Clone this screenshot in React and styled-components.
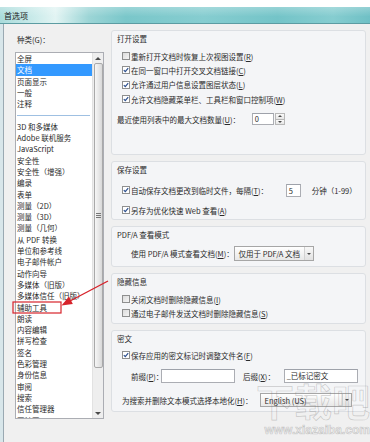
import React from "react";
import styled, { createGlobalStyle } from "styled-components";

const GlobalStyle = createGlobalStyle`
  html, body {
    margin: 0;
    padding: 0;
    background: #fff;
  }
  body {
    font-family: "Noto Sans CJK SC", "Noto Sans", sans-serif;
    font-size: 7.5px;
    color: #2a2a2a;
  }
  * {
    box-sizing: border-box;
  }
`;

const categories = [
  "全屏",
  "文档",
  "页面显示",
  "一般",
  "注释",
  null,
  "3D 和多媒体",
  "Adobe 联机服务",
  "JavaScript",
  "安全性",
  "安全性（增强）",
  "编录",
  "表单",
  "测量（2D）",
  "测量（3D）",
  "测量（几何）",
  "从 PDF 转换",
  "单位和参考线",
  "电子邮件帐户",
  "动作向导",
  "多媒体（旧版）",
  "多媒体信任（旧版）",
  "辅助工具",
  "朗读",
  "内容编辑",
  "拼写检查",
  "签名",
  "色彩管理",
  "身份信息",
  "审阅",
  "搜索",
  "信任管理器",
  "因特网",
];

const Key = ({ k }) => (
  <>
    (<u>{k}</u>)
  </>
);

const Check = ({ on }) => (
  <CheckBox $on={on}>
    {on && (
      <svg width="6" height="6" viewBox="0 0 6 6">
        <path d="M0.8 3.1 L2.3 4.7 L5.2 1.1" fill="none" stroke="#2b4f8f" strokeWidth="1.2" />
      </svg>
    )}
  </CheckBox>
);

const App = () => {
  return (
    <>
      <GlobalStyle />
      <Page>
        <TitleBar>首选项</TitleBar>
        <Frame>
          <Body>
            <Sidebar>
              <SideLabel>种类(G)：</SideLabel>
              <ListBox>
                <Items>
                  {categories.map((c, i) =>
                    c === null ? (
                      <Separator key={i} />
                    ) : (
                      <Item key={i} $selected={c === "文档"}>
                        {c}
                      </Item>
                    )
                  )}
                </Items>
                <ScrollBar>
                  <ScrollBtn>
                    <Tri $up />
                  </ScrollBtn>
                  <Thumb>
                    <Grip />
                  </Thumb>
                  <Track />
                  <ScrollBtn>
                    <Tri />
                  </ScrollBtn>
                </ScrollBar>
              </ListBox>
            </Sidebar>

            <Content>
              <Group $h={125}>
                <GroupTitle>打开设置</GroupTitle>
                <Row $mt={2} $indent={5}>
                  <Check />
                  <span>重新打开文档时恢复上次视图设置<Key k="R" /></span>
                </Row>
                <Row $indent={5}>
                  <Check on />
                  <span>在同一窗口中打开交叉文档链接<Key k="C" /></span>
                </Row>
                <Row $indent={5}>
                  <Check on />
                  <span>允许通过用户信息设置图层状态<Key k="L" /></span>
                </Row>
                <Row $indent={5}>
                  <Check on />
                  <span>允许文档隐藏菜单栏、工具栏和窗口控制项<Key k="W" /></span>
                </Row>
                <Row $mt={7} $h={12}>
                  <FieldLabel $w={134.7}>最近使用列表中的最大文档数量<Key k="U" />：</FieldLabel>
                  <Input $w={22} $h={12}>0</Input>
                  <Spin>
                    <SpinBtn>
                      <Tri $up $small />
                    </SpinBtn>
                    <SpinBtn>
                      <Tri $small />
                    </SpinBtn>
                  </Spin>
                </Row>
              </Group>

              <Group $h={59}>
                <GroupTitle>保存设置</GroupTitle>
                <Row $mt={5} $h={14} $indent={5}>
                  <Check on />
                  <FieldLabel $w={154.7}>自动保存文档更改到临时文件，每隔<Key k="T" />：</FieldLabel>
                  <Input $w={15} $h={13}>5</Input>
                  <Unit>分钟（1-99）</Unit>
                </Row>
                <Row $mt={6} $h={14} $indent={5}>
                  <Check on />
                  <span>另存为优化快速 Web 查看<Key k="A" /></span>
                </Row>
              </Group>

              <Group $h={41}>
                <GroupTitle>PDF/A 查看模式</GroupTitle>
                <Row $mt={3} $h={15} $indent={14}>
                  <FieldLabel $w={103}>使用 PDF/A 模式查看文档<Key k="M" />：</FieldLabel>
                  <Select $w={80} $h={15}>
                    <span>仅用于 PDF/A 文档</span>
                    <DropBtn>
                      <Tri $small />
                    </DropBtn>
                  </Select>
                </Row>
              </Group>

              <Group $h={51}>
                <GroupTitle>隐藏信息</GroupTitle>
                <Row $mt={2} $indent={5}>
                  <Check />
                  <span>关闭文档时删除隐藏信息<Key k="I" /></span>
                </Row>
                <Row $indent={5}>
                  <Check />
                  <span>通过电子邮件发送文档时删除隐藏信息<Key k="S" /></span>
                </Row>
              </Group>

              <Group $h={82}>
                <GroupTitle>密文</GroupTitle>
                <Row $mt={1} $indent={5}>
                  <Check on />
                  <span>保存应用的密文标记时调整文件名<Key k="F" /></span>
                </Row>
                <Row $mt={7} $h={14} $indent={14}>
                  <FieldLabel $w={29.7}>前缀<Key k="P" />：</FieldLabel>
                  <Input $w={74} $h={14} />
                  <FieldLabel $w={40.7} $ml={8.3}>后缀<Key k="X" />：</FieldLabel>
                  <Input $w={74} $h={14}>_已标记密文</Input>
                </Row>
                <Row $mt={10} $h={14} $indent={5}>
                  <FieldLabel $w={138}>为搜索并删除文本模式选择本地化<Key k="H" />：</FieldLabel>
                  <Select $w={92} $h={14}>
                    <span>English (US)</span>
                    <DropBtn>
                      <Tri $small />
                    </DropBtn>
                  </Select>
                </Row>
              </Group>
            </Content>
          </Body>
        </Frame>

        <Annotation width="370" height="442" viewBox="0 0 370 442">
          <rect x="13" y="302" width="48" height="11" fill="none" stroke="#d7232b" strokeWidth="1.2" />
          <line x1="108" y1="281" x2="70" y2="301" stroke="#d7232b" strokeWidth="1.4" />
          <polygon points="61.5,305.5 69,296.6 72.8,304" fill="#d7232b" />
        </Annotation>

        <Watermark>
          <Big>下载吧</Big>
          <Url>www.xiazaiba.com</Url>
        </Watermark>
      </Page>
    </>
  );
};

const Page = styled.div`
  position: relative;
  width: 370px;
  height: 442px;
  overflow: hidden;
  padding-top: 7px;
  background: #fff;
  display: flex;
  flex-direction: column;
`;

const TitleBar = styled.div`
  height: 17px;
  flex-shrink: 0;
  display: flex;
  align-items: center;
  padding-left: 4px;
  font-size: 8px;
  color: #1a1a1a;
  border-bottom: 1px solid #5c9ca2;
  background:
    linear-gradient(180deg, rgba(255, 255, 255, 0.25) 0%, rgba(255, 255, 255, 0) 60%),
    linear-gradient(
      90deg,
      #a9dbdb 0%,
      #cdeceb 10%,
      #e2f4f3 15%,
      #9cd5d6 24%,
      #7ac7ca 34%,
      #86cdd0 55%,
      #74c4c8 75%,
      #86cdd0 90%,
      #6fc0c5 100%
    );
`;

const Frame = styled.div`
  flex: 1;
  display: flex;
  padding-left: 3px;
  background: #d8e6ea;
`;

const Body = styled.div`
  flex: 1;
  display: flex;
  padding: 6px 0 0 11px;
  border-left: 1px solid #9aa9b2;
  background: #f0f0f0;
`;

const Sidebar = styled.div`
  width: 89px;
  flex-shrink: 0;
  padding-top: 4px;
  display: flex;
  flex-direction: column;
`;

const SideLabel = styled.div`
  height: 11px;
  line-height: 11px;
  padding-left: 2px;
  margin-bottom: 7px;
`;

const ListBox = styled.div`
  height: 367px;
  display: flex;
  border: 1px solid #abadb3;
  background: #fff;
`;

const Items = styled.div`
  width: 76px;
  overflow: hidden;
`;

const Item = styled.div`
  height: 11.3px;
  line-height: 11.3px;
  padding-left: 1px;
  white-space: nowrap;
  color: ${(p) => (p.$selected ? "#fff" : "#2a2a2a")};
  background: ${(p) => (p.$selected ? "#3399ff" : "transparent")};
`;

const Separator = styled.div`
  height: 11.3px;
  display: flex;
  align-items: center;
  padding: 0 2px 0 1px;

  &::after {
    content: "";
    flex: 1;
    height: 1px;
    background: #9fc0e2;
  }
`;

const ScrollBar = styled.div`
  width: 11px;
  display: flex;
  flex-direction: column;
  background: #eeeeee;
  border-left: 1px solid #e2e2e2;
`;

const ScrollBtn = styled.div`
  height: 10px;
  display: flex;
  align-items: center;
  justify-content: center;
`;

const Tri = styled.div`
  width: 0;
  height: 0;
  border-left: ${(p) => (p.$small ? 2.5 : 3)}px solid transparent;
  border-right: ${(p) => (p.$small ? 2.5 : 3)}px solid transparent;
  ${(p) =>
    p.$up
      ? `border-bottom: ${p.$small ? 2.5 : 3}px solid #4a4a4a;`
      : `border-top: ${p.$small ? 2.5 : 3}px solid #4a4a4a;`}
`;

const Thumb = styled.div`
  height: 305px;
  margin: 0 0.5px;
  display: flex;
  align-items: center;
  justify-content: center;
  border: 1px solid #a9a9a9;
  border-radius: 2px;
  background: linear-gradient(90deg, #f6f6f6 0%, #e8e8e8 50%, #d8d8d8 100%);
`;

const Grip = styled.div`
  width: 5px;
  height: 5px;
  background: repeating-linear-gradient(180deg, #777 0 1px, transparent 1px 2px);
`;

const Track = styled.div`
  flex: 1;
`;

const Content = styled.div`
  flex: 1;
  display: flex;
  flex-direction: column;
  gap: 6px;
  margin-left: 7px;
  margin-right: 4px;
`;

const Group = styled.div`
  height: ${(p) => p.$h}px;
  display: flex;
  flex-direction: column;
  padding-left: 5px;
  border: 1px solid #dcdfe3;
  border-radius: 3px;
  background: #f4f5f7;
`;

const GroupTitle = styled.div`
  height: 16px;
  line-height: 16px;
  color: #2a2a2a;
`;

const Row = styled.div`
  height: ${(p) => p.$h || 14.3}px;
  margin-top: ${(p) => p.$mt || 0}px;
  padding-left: ${(p) => p.$indent || 0}px;
  display: flex;
  align-items: center;
  white-space: nowrap;

  u {
    text-decoration: underline;
    text-underline-offset: 1px;
  }
`;

const CheckBox = styled.div`
  width: 8px;
  height: 8px;
  margin-right: 1px;
  flex-shrink: 0;
  display: flex;
  align-items: center;
  justify-content: center;
  border: 1px solid #8e8f8f;
  background: ${(p) =>
    p.$on ? "#fff" : "linear-gradient(135deg, #dcdcdc 0%, #f4f4f4 100%)"};
`;

const FieldLabel = styled.span`
  width: ${(p) => p.$w}px;
  margin-left: ${(p) => p.$ml || 0}px;
  flex-shrink: 0;
`;

const Input = styled.div`
  width: ${(p) => p.$w}px;
  height: ${(p) => p.$h}px;
  line-height: ${(p) => p.$h - 2}px;
  padding-left: 2px;
  flex-shrink: 0;
  border: 1px solid #abadb3;
  border-top-color: #9ea2aa;
  background: #fff;
  color: #2a2a2a;
`;

const Spin = styled.div`
  width: 10px;
  height: 12px;
  margin-left: 1.3px;
  display: flex;
  flex-direction: column;
`;

const SpinBtn = styled.div`
  flex: 1;
  display: flex;
  align-items: center;
  justify-content: center;
  border: 1px solid #b8b8b8;
  background: linear-gradient(180deg, #fafafa, #e6e6e6);

  & + & {
    border-top: none;
  }
`;

const Unit = styled.span`
  margin-left: 11px;
`;

const Select = styled.div`
  width: ${(p) => p.$w}px;
  height: ${(p) => p.$h}px;
  display: flex;
  align-items: center;
  justify-content: space-between;
  padding-left: 3.5px;
  flex-shrink: 0;
  border: 1px solid #a6a6a6;
  background: linear-gradient(180deg, #ffffff 0%, #f3f3f3 50%, #e8e8e8 100%);
`;

const DropBtn = styled.div`
  width: 9px;
  align-self: stretch;
  display: flex;
  align-items: center;
  justify-content: center;
  border-left: 1px solid #d2d2d2;
  background: linear-gradient(180deg, #f8f8f8, #e2e2e2);
`;

const Annotation = styled.svg`
  position: absolute;
  top: 0;
  left: 0;
  pointer-events: none;
`;

const Watermark = styled.div`
  position: absolute;
  left: 256px;
  top: 374px;
  display: flex;
  flex-direction: column;
  align-items: flex-end;
  pointer-events: none;
  color: transparent;
  -webkit-text-stroke: 0.7px rgba(120, 120, 120, 0.35);
`;

const Big = styled.div`
  font-size: 38px;
  font-weight: bold;
  line-height: 52px;
  white-space: nowrap;
`;

const Url = styled.div`
  font-family: "Liberation Sans", sans-serif;
  font-size: 12px;
  font-weight: bold;
  line-height: 12px;
  margin-top: -2px;
  white-space: nowrap;
`;

export default App;
